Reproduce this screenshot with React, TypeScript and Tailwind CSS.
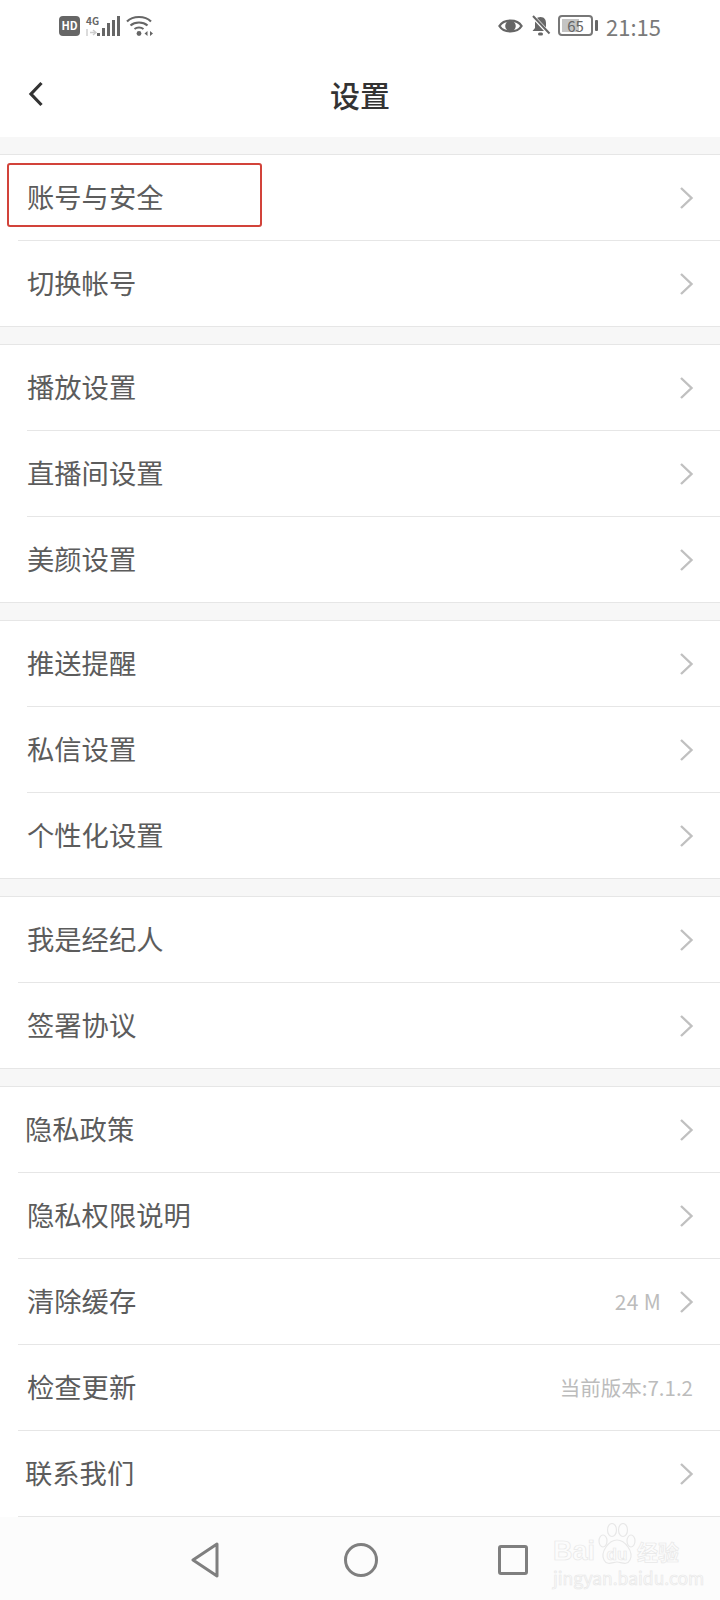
import React from "react";

const Chevron = () => (
  <svg width="15" height="24" viewBox="0 0 15 24" fill="none" className="shrink-0">
    <path d="M2 2 L12.5 12 L2 22" stroke="#c0c0c0" strokeWidth="2.4" />
  </svg>
);

type RowData = { label: string; right?: string; noChevron?: boolean; tx?: string };

function Row({ r, inset, last }: { r: RowData; inset: string; last: boolean }) {
  return (
    <div className={`${last ? "h-[85px]" : "h-[86px]"} relative flex items-center pr-[26px]`}>
      <span className={`${r.tx ?? "pl-[27px]"} pb-[2px] text-[27.3px] leading-none text-[#5c5c5c]`}>{r.label}</span>
      <div className="ml-auto flex items-center gap-[18px]">
        {r.right && (
          <span className={`${r.noChevron ? "pr-[1px] text-[20.5px]" : "text-[21px] tracking-[0.3px]"} pb-[2px] leading-none text-[#bcbcbc]`}>
            {r.right}
          </span>
        )}
        {!r.noChevron && <Chevron />}
      </div>
      {!last && <div className={`absolute bottom-0 right-0 h-px bg-[#e6e6e6] ${inset}`} />}
    </div>
  );
}

function Group({ rows, inset }: { rows: RowData[]; inset: string }) {
  return (
    <div className="border-y border-[#e6e6e6] bg-white">
      {rows.map((r, i) => (
        <Row key={r.label} r={r} inset={inset} last={i === rows.length - 1} />
      ))}
    </div>
  );
}

const groups: { inset: string; rows: RowData[] }[] = [
  { inset: "left-[18px]", rows: [{ label: "账号与安全" }, { label: "切换帐号" }] },
  { inset: "left-[27px]", rows: [{ label: "播放设置" }, { label: "直播间设置" }, { label: "美颜设置" }] },
  { inset: "left-[27px]", rows: [{ label: "推送提醒" }, { label: "私信设置" }, { label: "个性化设置" }] },
  { inset: "left-[18px]", rows: [{ label: "我是经纪人" }, { label: "签署协议" }] },
];

const last: RowData[] = [
  { label: "隐私政策", tx: "pl-[25px]" },
  { label: "隐私权限说明" },
  { label: "清除缓存", right: "24 M" },
  { label: "检查更新", right: "当前版本:7.1.2", noChevron: true },
  { label: "联系我们", tx: "pl-[25px]" },
];

const StatusLeft = () => (
  <div className="flex items-center">
    <div className="flex h-[20px] w-[21px] items-center justify-center rounded-[4px] bg-[#666666] text-[11px] font-bold leading-none text-white">
      HD
    </div>
    <svg width="34" height="22" viewBox="0 0 34 22" className="ml-[6px] overflow-visible">
      <text x="0" y="10" fontSize="10" fontWeight="700" fill="#666666">4G</text>
      <path d="M1 14 V21 M4 17.5 H10 M7 15 L10 17.5 L7 20" stroke="#cccccc" strokeWidth="1.4" fill="none" />
      <rect x="11" y="18" width="3" height="3" fill="#666666" />
      <rect x="16" y="13" width="3" height="8" fill="#666666" />
      <rect x="21" y="8" width="3" height="13" fill="#666666" />
      <rect x="26" y="5" width="3" height="16" fill="#666666" />
      <rect x="31" y="1" width="3" height="20" fill="#666666" />
    </svg>
    <svg width="27" height="22" viewBox="0 0 27 22" fill="none" className="ml-[6px]">
      <path d="M1 6.5 C7 0.5 19 0.5 25 6.5" stroke="#666666" strokeWidth="2.2" />
      <path d="M4.5 10.5 C9 6.5 17 6.5 21.5 10.5" stroke="#666666" strokeWidth="2.2" />
      <path d="M8.5 14 C11 12 15 12 17.5 14" stroke="#666666" strokeWidth="2" />
      <circle cx="13" cy="18.5" r="2.4" fill="#666666" />
      <path d="M18.5 18.5 L21.5 16 V21 Z M27 18.5 L24 16 V21 Z" fill="#666666" />
    </svg>
  </div>
);

const StatusRight = () => (
  <div className="flex items-center">
    <svg width="25" height="20" viewBox="0 0 26 20" fill="none">
      <path d="M1.5 10 C6 2.5 20 2.5 24.5 10 C20 17.5 6 17.5 1.5 10 Z" stroke="#666666" strokeWidth="2.4" />
      <circle cx="13" cy="10" r="5.5" fill="#666666" />
    </svg>
    <svg width="21" height="22" viewBox="0 0 20 22" fill="none" className="ml-[7px]">
      <path d="M10 2 C6 2 4.5 5 4.5 8 V13 L2 16 H18 L15.5 13 V8 C15.5 5 14 2 10 2 Z" fill="#666666" />
      <rect x="7.5" y="17.5" width="5" height="3" rx="1.5" fill="#666666" />
      <path d="M2 1 L19 19" stroke="white" strokeWidth="4" />
      <path d="M2.5 1 L19 18.5" stroke="#666666" strokeWidth="2" />
    </svg>
    <div className="ml-[7px] flex items-center">
      <div className="relative flex h-[21px] w-[35px] items-center rounded-[4px] border-2 border-[#777777] p-[2px]">
        <div className="h-full w-[64%] bg-[#c4c4c4]" />
        <span className="absolute inset-0 flex items-center justify-center text-[15px] leading-none text-[#666666]">65</span>
      </div>
      <div className="ml-[2px] h-[11px] w-[3px] rounded-[1px] bg-[#666666]" />
    </div>
    <span className="ml-[8px] text-[22px] leading-none text-[#7a7a7a]">21:15</span>
  </div>
);

const Watermark = () => (
  <div className="absolute left-[553px] top-[1538px] flex flex-col items-start text-transparent [-webkit-text-stroke:0.7px_#e8e8e8]">
    <svg width="40" height="46" viewBox="0 0 40 46" fill="none" className="absolute left-[44px] top-[-15px]" stroke="#e8e8e8" strokeWidth="1.2">
      <ellipse cx="6" cy="18" rx="4" ry="6" />
      <ellipse cx="15" cy="7" rx="4.5" ry="6.5" />
      <ellipse cx="26" cy="7" rx="4.5" ry="6.5" />
      <ellipse cx="34" cy="18" rx="4" ry="6" />
      <path d="M20 17 C28 17 37 29 33 37 C30 43 24 39 20 39 C16 39 10 43 7 37 C3 29 12 17 20 17 Z" />
    </svg>
    <div className="flex items-center">
      <span className="w-[44px] text-[27px] font-bold leading-none" style={{ fontFamily: '"Liberation Sans", sans-serif' }}>Bai</span>
      <span className="w-[40px] pt-[5px] text-center text-[17px] font-bold leading-none" style={{ fontFamily: '"Liberation Sans", sans-serif' }}>du</span>
      <span className="text-[21px] font-bold leading-none">经验</span>
    </div>
    <span className="mt-[4px] text-[17.5px] leading-none">jingyan.baidu.com</span>
  </div>
);

export default function App() {
  return (
    <div
      className="relative h-[1600px] w-[720px] overflow-hidden bg-white"
      style={{ fontFamily: '"Noto Sans CJK SC", "Noto Sans", sans-serif' }}
    >
      <div className="flex h-[51px] items-center justify-between pl-[59px] pr-[59px]">
        <StatusLeft />
        <StatusRight />
      </div>
      <div className="relative flex h-[86px] items-center justify-center">
        <svg width="16" height="26" viewBox="0 0 16 26" fill="none" className="absolute left-[28px] top-[30px]">
          <path d="M13.5 2 L3 13 L13.5 24" stroke="#333333" strokeWidth="3.2" />
        </svg>
        <span className="text-[30px] font-medium leading-none text-[#333333]">设置</span>
      </div>
      <div className="flex flex-col gap-[17px] bg-[#f7f7f7] pt-[17px]">
        {groups.map((g) => (
          <Group key={g.rows[0].label} rows={g.rows} inset={g.inset} />
        ))}
        <div className="border-t border-[#e6e6e6] bg-white">
          {last.map((r) => (
            <Row key={r.label} r={r} inset="left-[18px]" last={false} />
          ))}
        </div>
      </div>
      <div className="absolute bottom-0 left-0 right-0 flex h-[83px] items-center gap-[125px] bg-[#fcfcfc] pl-[190px] pt-[3px]">
        <svg width="30" height="36" viewBox="0 0 30 36" fill="none" className="-mr-[1px]">
          <path d="M27 2 L3 18 L27 34 Z" stroke="#7f7f7f" strokeWidth="3" strokeLinejoin="round" />
        </svg>
        <svg width="34" height="34" viewBox="0 0 34 34" fill="none" className="-mr-[5px]">
          <circle cx="17" cy="17" r="15.5" stroke="#7f7f7f" strokeWidth="3" />
        </svg>
        <svg width="30" height="30" viewBox="0 0 30 30" fill="none">
          <rect x="1.5" y="1.5" width="27" height="27" rx="1.5" stroke="#7f7f7f" strokeWidth="3" />
        </svg>
      </div>
      <Watermark />
      <div className="absolute left-[7px] top-[163px] h-[64px] w-[255px] rounded-[3px] border-2 border-[#d2433a]" />
    </div>
  );
}
